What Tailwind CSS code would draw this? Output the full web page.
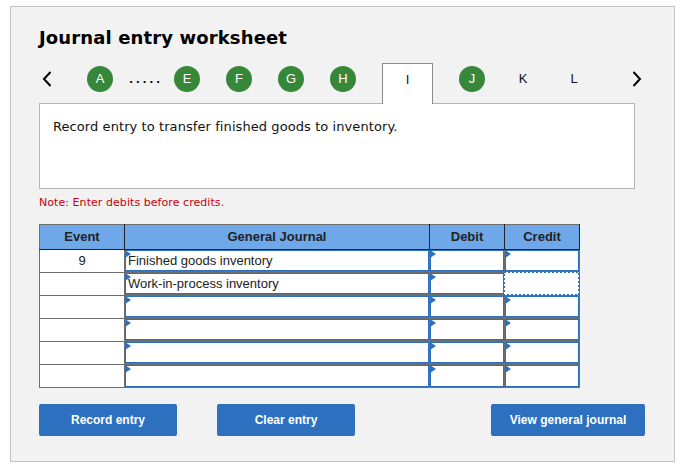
<!DOCTYPE html>
<html lang="en">
<head>
    <meta charset="UTF-8">
    <title>Journal entry worksheet</title>
    <script src="https://cdn.jsdelivr.net/npm/@tailwindcss/browser@4"></script>
</head>
<body class="bg-white">
    <div class="w-[685px] h-[471px] pt-[6px] pl-[10px] overflow-hidden font-['Liberation_Sans',sans-serif]">
        <!-- Worksheet panel -->
        <div class="w-[665px] h-[456px] bg-[#f2f2f2] border border-[#c4c4c4] pl-[28px] pt-[19px]">
            <h1 class="h-[24px] leading-[24px] text-[18px] tracking-[0.13px] font-bold text-black font-['DejaVu_Sans',sans-serif]">Journal entry worksheet</h1>

            <!-- Tabs -->
            <div class="flex items-center h-[40px] pb-[8px] mt-[13px] w-[640px] relative z-10 text-[13px] text-[#111]">
                <svg class="w-[10px] h-[16px] ml-[3px]" viewBox="0 0 10 16" fill="none" stroke="black" stroke-width="2"><path d="M8.5 1 L2 8 L8.5 15"/></svg>
                <div class="w-[26px] h-[26px] ml-[35px] rounded-full bg-[#368739] text-white flex items-center justify-center">A</div>
                <div class="w-[34px] ml-[16px] mt-[3px] text-[#111] font-bold tracking-[2.6px] font-['DejaVu_Sans',sans-serif] text-[11px]">.....</div>
                <div class="w-[26px] h-[26px] ml-[11px] rounded-full bg-[#368739] text-white flex items-center justify-center">E</div>
                <div class="w-[26px] h-[26px] ml-[26px] rounded-full bg-[#368739] text-white flex items-center justify-center">F</div>
                <div class="w-[26px] h-[26px] ml-[26px] rounded-full bg-[#368739] text-white flex items-center justify-center">G</div>
                <div class="w-[26px] h-[26px] ml-[26px] rounded-full bg-[#368739] text-white flex items-center justify-center">H</div>
                <div class="w-[51px] h-[41px] ml-[26px] self-start bg-white border border-b-0 border-[#8c8c8c] flex items-center justify-center pb-[9px]">I</div>
                <div class="w-[26px] h-[26px] ml-[26px] rounded-full bg-[#368739] text-white flex items-center justify-center">J</div>
                <div class="w-[26px] ml-[25px] text-center">K</div>
                <div class="w-[26px] ml-[25px] text-center">L</div>
                <svg class="w-[10px] h-[16px] ml-[45px]" viewBox="0 0 10 16" fill="none" stroke="black" stroke-width="2"><path d="M1.5 1 L8 8 L1.5 15"/></svg>
            </div>

            <!-- Instruction box -->
            <div class="w-[596px] h-[86px] bg-white border border-[#b5b5b5] px-[13px] pt-[15px] text-[13px] tracking-[0.08px] leading-[16px] text-[#111] font-['DejaVu_Sans',sans-serif]">Record entry to transfer finished goods to inventory.</div>

            <p class="mt-[7px] h-[14px] leading-[14px] text-[11px] tracking-[0.06px] text-[#c8000a] font-['DejaVu_Sans',sans-serif]">Note: Enter debits before credits.</p>

            <!-- Journal table -->
            <table class="mt-[14px] w-[541px] table-fixed border-collapse text-[13px] text-[#222]">
                <thead>
                    <tr class="h-[25px] bg-[#6fa8e9] font-bold">
                        <th class="w-[85px] border border-[#6e6e6e] border-r-[#222] border-b-[#222]">Event</th>
                        <th class="w-[305px] border border-[#6e6e6e] border-r-[#222] border-b-[#222]">General Journal</th>
                        <th class="w-[75px] border border-[#6e6e6e] border-r-[#222] border-b-[#222]">Debit</th>
                        <th class="w-[75px] border border-[#6e6e6e] border-r-[#222] border-b-[#222]">Credit</th>
                    </tr>
                </thead>
                <tbody id="rows"></tbody>
            </table>

            <!-- Actions -->
            <div class="flex mt-[16px] text-[12px] font-bold text-white">
                <button class="w-[138px] h-[32px] rounded-[2px] bg-[#2d70c0]">Record entry</button>
                <button class="w-[138px] h-[32px] ml-[40px] rounded-[2px] bg-[#2d70c0]">Clear entry</button>
                <button class="w-[154px] h-[32px] ml-[136px] rounded-[2px] bg-[#2d70c0]">View general journal</button>
            </div>
        </div>
    </div>

    <script>
        const journal = [
            { event: '9', account: 'Finished goods inventory' },
            { event: '', account: 'Work-in-process inventory' },
            { event: '', account: '' },
            { event: '', account: '' },
            { event: '', account: '' },
            { event: '', account: '' },
        ];

        const marker = `<svg class="absolute -left-[1px] -top-[1px] w-[6px] h-[8px]" viewBox="0 0 6 8"><path d="M0 0 L6 4 L0 8 Z" fill="#2d70c0"/></svg>`;

        function inputCell(text, last) {
            const height = last ? 'h-[22px]' : 'h-[21px]';
            return `<td class="p-0 border border-[#6e6e6e] bg-white">
                <div class="h-[22px] bg-[#6e6e6e]">
                    <div class="relative ${height} bg-white border border-[#2d70c0] pl-[2px] leading-[19px] whitespace-nowrap overflow-visible">${marker}${text}</div>
                </div>
            </td>`;
        }

        // Focused credit cell: square dots drawn over the cell borders
        const focusedCell = `<td class="relative p-0 border border-[#6e6e6e] bg-white">
            <svg class="absolute z-10 -left-[2px] -top-[2px] w-[77px] h-[25px]" viewBox="0 0 77 25" fill="white" stroke="#2d70c0" stroke-width="2" stroke-dasharray="2 2"><rect x="1" y="1" width="75" height="23"/></svg>
        </td>`;

        document.getElementById('rows').innerHTML = journal.map((row, i) => {
            const last = i === journal.length - 1;
            return `
            <tr class="h-[23px]">
                <td class="p-0 border border-[#6e6e6e] bg-white text-center">${row.event}</td>
                ${inputCell(row.account, last)}
                ${inputCell('', last)}
                ${i === 1 ? focusedCell : inputCell('', last)}
            </tr>`;
        }).join('');
    </script>
</body>
</html>
